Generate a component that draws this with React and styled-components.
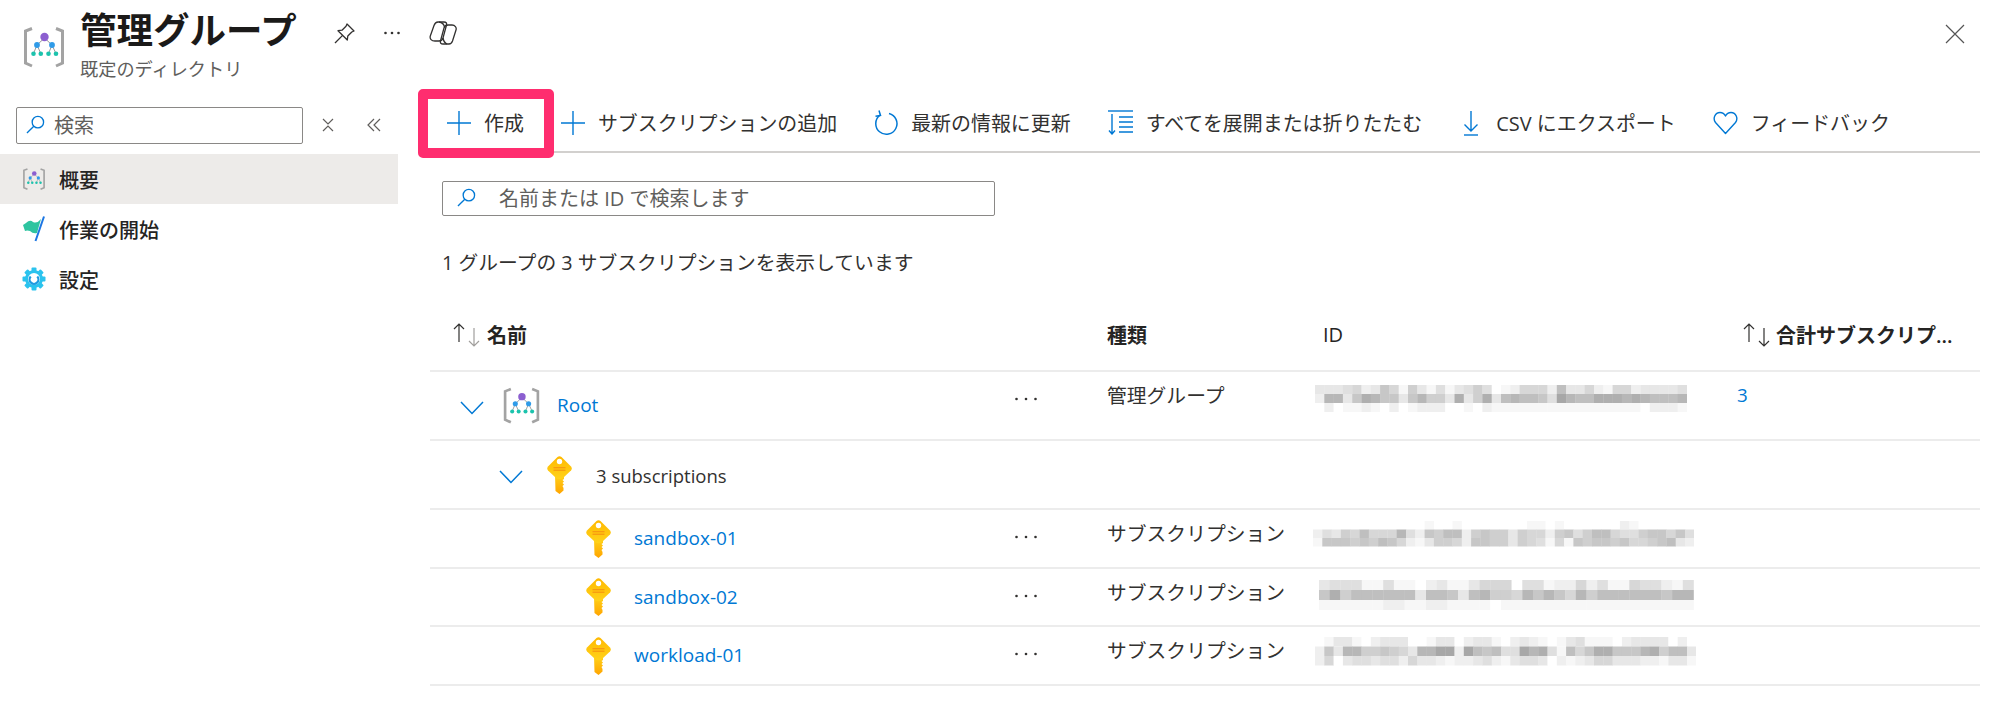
import React from 'react';
import styled, { createGlobalStyle } from 'styled-components';

const GlobalStyle = createGlobalStyle`
  html, body {
    margin: 0;
    padding: 0;
    background: #fff;
  }
  body {
    font-family: "Open Sans", "Noto Sans CJK JP", sans-serif;
    font-size: 20px;
    color: #323130;
  }
`

const Page = styled.div`
  width: 2000px;
  height: 728px;
  overflow: hidden;
`
const Header = styled.header`
  display: flex;
  align-items: flex-start;
  height: 88px;
  padding-top: 8px;
`
const HeaderIcon = styled.div`
  display: flex;
  margin: 17px 14px 0 22px;
`
const TitleBlock = styled.div`
  display: flex;
  flex-direction: column;
`
const Title = styled.h1`
  margin: 0;
  font-size: 36.5px;
  line-height: 44px;
  font-weight: 700;
  color: #1b1a19;
`
const Subtitle = styled.div`
  margin-top: 4px;
  font-size: 18.2px;
  line-height: 26px;
  color: #605e5c;
`
const HeaderActions = styled.div`
  display: flex;
  align-items: center;
  height: 50px;
  margin-left: 37px;
  gap: 29px;
  color: #323130;
`
const CloseButton = styled.div`
  display: flex;
  margin: 16px 35px 0 auto;
  color: #555;
`
const Body = styled.div`
  display: flex;
`
const Sidebar = styled.aside`
  width: 398px;
  flex-shrink: 0;
  padding-top: 11px;
`
const SideTools = styled.div`
  display: flex;
  align-items: center;
  padding-left: 16px;
  height: 36px;
`
const SearchBox = styled.div`
  display: flex;
  align-items: center;
  box-sizing: border-box;
  width: ${(p) => p.$width}px;
  height: ${(p) => p.$height}px;
  padding-left: ${(p) => p.$pad}px;
  padding-bottom: 2px;
  gap: ${(p) => p.$gap}px;
  border: 1.5px solid #8a8886;
  border-radius: 2px;
  background: #fff;
  color: #605e5c;
  white-space: nowrap;
`
const SideIconButton = styled.div`
  display: flex;
  margin-left: ${(p) => p.$left}px;
  color: #605e5c;
`
const NavList = styled.nav`
  margin-top: 11px;
`
const NavItem = styled.div`
  display: flex;
  align-items: center;
  height: 50px;
  padding-left: 22px;
  gap: 13px;
  font-weight: 500;
  color: #252423;
  background: ${(p) => (p.$active ? '#edebe9' : 'transparent')};
`
const NavIcon = styled.div`
  display: flex;
  justify-content: center;
  width: 24px;
`
const Main = styled.main`
  flex: 1;
  margin: 0 20px;
  min-width: 0;
`
const Toolbar = styled.div`
  display: flex;
  align-items: center;
  height: 55px;
  padding-left: 29px;
  gap: 37px;
  border-bottom: 2px solid #d2d0ce;
  font-size: 19.95px;
  white-space: nowrap;
`
const ToolButton = styled.div`
  position: relative;
  display: flex;
  align-items: center;
  box-sizing: border-box;
  gap: 13px;
  height: 100%;
  padding-bottom: 2px;
  color: #323130;
  svg {
    color: #0078d4;
    flex-shrink: 0;
  }
`
const Highlight = styled.div`
  position: absolute;
  left: -29px;
  right: -30px;
  top: -7px;
  bottom: -7px;
  border: 10px solid #ff2d6f;
  border-radius: 5px;
`
const ContentSearch = styled.div`
  margin: 28px 0 0 24px;
`
const CountText = styled.div`
  margin: 33px 0 0 24px;
  font-size: 19.8px;
  line-height: 28px;
`
const Table = styled.div`
  margin: 24px 0 0 12px;
`
const Row = styled.div`
  display: grid;
  grid-template-columns: 570px 107px 216px 415px 1fr;
  box-sizing: border-box;
  height: ${(p) => p.$height}px;
  border-bottom: 2px solid #ececec;
`
const HeadCell = styled.div`
  display: flex;
  align-items: center;
  gap: ${(p) => p.$gap || 0}px;
  padding-left: ${(p) => p.$pad || 0}px;
  padding-bottom: 2px;
  font-weight: ${(p) => p.$weight || 600};
  color: #252423;
  white-space: nowrap;
`
const TreeCell = styled.div`
  display: flex;
  align-items: center;
  gap: ${(p) => p.$gap}px;
  padding-left: ${(p) => p.$indent}px;
`
const Chevron = styled.svg`
  margin-top: 5px;
  color: #0078d4;
`
const RootGlyph = styled.div`
  display: flex;
  margin-left: 2px;
`
const NodeLink = styled.a`
  padding-bottom: 1px;
  font-size: 19px;
  color: #0078d4;
  text-decoration: none;
`
const NodeLabel = styled.span`
  padding-top: 1px;
  font-size: 18.5px;
`
const DotsCell = styled.div`
  display: flex;
  padding: 25px 0 0 15px;
`
const TextCell = styled.div`
  padding-top: 10px;
  font-size: 19.8px;
  line-height: 28px;
  white-space: nowrap;
`
const IdCell = styled.div`
  margin-left: ${(p) => p.$shift}px;
  padding-top: ${(p) => p.$top}px;
`
const CountLink = styled.a`
  margin-left: -1px;
  padding-top: 9px;
  line-height: 28px;
  font-size: 18.8px;
  color: #0078d4;
`
const MosaicSvg = styled.svg`
  display: block;
  filter: blur(0.6px);
`

const Mosaic = ({ rows, cell, cellHeight }) => (
  <MosaicSvg
    width={rows[0].length * cell}
    height={rows.length * cellHeight}
    viewBox={`0 0 ${rows[0].length * cell} ${rows.length * cellHeight}`}
  >
    {rows.map((line, y) =>
      line.split('').map((d, x) => {
        const g = 255 - parseInt(d, 16) * 8;
        return (
          <rect
            key={`${x}-${y}`}
            x={x * cell}
            y={y * cellHeight}
            width={cell + 0.3}
            height={cellHeight}
            fill={`rgb(${g},${g},${g})`}
          />
        );
      })
    )}
  </MosaicSvg>
);

const GroupIcon = ({ size = 44 }) => (
  <svg width={size} height={size * 45 / 44} viewBox="0 0 44 45">
    <path d="M10 3.5 L3.5 6 V38 L10 41" fill="none" stroke="#a3a3a3" strokeWidth="3" />
    <path d="M34 3.5 L40.5 6 V38 L34 41" fill="none" stroke="#a3a3a3" strokeWidth="3" />
    <g fill="none" stroke="#8a8a8a" strokeWidth="0.9">
      <path d="M22.5 13 L15 20 M22.5 13 L30 20" />
      <path d="M15 20 L11.5 28.5 M15 20 L18.8 28.5 M30 20 L26.5 28.5 M30 20 L34 28.5" />
    </g>
    <circle cx="22.5" cy="12" r="4.2" fill="#8c5fd0" />
    <circle cx="15" cy="20" r="2.9" fill="#2f9be8" />
    <circle cx="30" cy="20" r="2.9" fill="#2f9be8" />
    <circle cx="11.5" cy="28.7" r="2.3" fill="#1cc3ad" />
    <circle cx="18.8" cy="28.7" r="2.3" fill="#1cc3ad" />
    <circle cx="26.5" cy="28.7" r="2.3" fill="#1cc3ad" />
    <circle cx="34" cy="28.7" r="2.3" fill="#1cc3ad" />
  </svg>
);

const KeyIcon = () => (
  <svg width="25" height="38" viewBox="0 0 25 38">
    <defs>
      <linearGradient id="keyHead" x1="0" y1="0" x2="0" y2="1">
        <stop offset="0" stopColor="#ffb900" />
        <stop offset="1" stopColor="#ffd21a" />
      </linearGradient>
      <linearGradient id="keyStem" x1="0" y1="0" x2="0" y2="1">
        <stop offset="0" stopColor="#ffd21a" />
        <stop offset="1" stopColor="#ffa400" />
      </linearGradient>
    </defs>
    <path d="M8 19 H17 V23 L15.5 24 L17 25.5 L15.5 27 L17 28.5 L15.5 30 L16.5 32 V34.5 L12.5 38 L8.5 35 Z" fill="url(#keyStem)" />
    <path d="M10.5 1 Q12.5 -0.5 14.5 1 L24 10.5 Q25.5 12.5 24 14.5 L16 22 Q12.5 24.5 9 22 L1 14.5 Q-0.5 12.5 1 10.5 Z" fill="url(#keyHead)" />
    <circle cx="12.5" cy="5.5" r="2.7" fill="#fff" />
    <rect x="6.5" y="11" width="12" height="1.3" fill="#f79a10" />
    <rect x="6.5" y="13.6" width="12" height="1.3" fill="#f79a10" />
  </svg>
);

const FlagIcon = () => (
  <svg width="24" height="26" viewBox="0 0 24 26">
    <path d="M1 9 L4 7 Q8 3 11 6 Q15 8 19 3 L15 17 Q11 18 8 15 Q5 14 3 15 Z" fill="#2ec4a0" />
    <path d="M22 0.5 L13.5 25" stroke="#1c76e3" strokeWidth="2" fill="none" />
  </svg>
);

const GearIcon = () => (
  <svg width="24" height="24" viewBox="0 0 24 24">
    <g fill="#2bc3ee">
      <circle cx="12" cy="12" r="9" />
      {[0, 45, 90, 135, 180, 225, 270, 315].map((a) => (
        <rect key={a} x="9.5" y="0.5" width="5" height="5" rx="1" transform={`rotate(${a} 12 12)`} />
      ))}
    </g>
    <circle cx="12" cy="12" r="6" fill="#fff" />
    <path d="M8.7 9.5 A4.4 4.4 0 1 0 15.3 9.5" fill="none" stroke="#1f9be0" strokeWidth="2.2" />
  </svg>
);

const SearchIcon = ({ size = 20 }) => (
  <svg width={size} height={size} viewBox="0 0 20 20" fill="none" stroke="#0078d4" strokeWidth="1.4">
    <circle cx="12.5" cy="7.5" r="6" />
    <path d="M8.2 11.8 L1 19" />
  </svg>
);

const PinIcon = () => (
  <svg width="21" height="21" viewBox="0 0 21 21" fill="none" stroke="currentColor" strokeWidth="1.3" strokeLinejoin="round">
    <path d="M13 1 L20 8 L17.8 9 L13.8 13 L13.3 17 L4 7.7 L8 7.2 L12 3.2 Z" />
    <path d="M8.6 12.4 L1 20" />
  </svg>
);

const Dots = ({ width = 16 }) => (
  <svg width={width} height="4" viewBox={`0 0 ${width} 4`} fill="#323130">
    <circle cx="1.5" cy="2" r="1.3" />
    <circle cx={width / 2} cy="2" r="1.3" />
    <circle cx={width - 1.5} cy="2" r="1.3" />
  </svg>
);

const CopilotIcon = () => (
  <svg width="28" height="24" viewBox="0 0 28 24" fill="none" stroke="currentColor" strokeWidth="1.3" strokeLinejoin="round">
    <path d="M9 1 H15 C17 1 18 2 17.5 4 L14 17 C13.5 19 12 20 10 20 H6 C2.5 20 0.5 18 1.3 15 L5 4.5 C5.8 2.3 7 1 9 1 Z" />
    <path d="M19 4 H23 C26 4 27.8 6.5 27 9 L23.5 20 C22.8 22 21.5 23 20 23 H14 C12 23 11 22 11.5 20 L15 7 C15.5 5 17 4 19 4 Z" />
    <path d="M10 1 C13 1.5 15 3 15.5 6 M14 17 C14.5 19.5 15.5 22 18 23" />
  </svg>
);

const CloseIcon = () => (
  <svg width="20" height="20" viewBox="0 0 20 20" stroke="currentColor" strokeWidth="1.2" fill="none">
    <path d="M1 1 L19 19 M19 1 L1 19" />
  </svg>
);

const CollapseIcon = () => (
  <svg width="12" height="14" viewBox="0 0 12 14" fill="none" stroke="currentColor" strokeWidth="1.2">
    <path d="M1 1 L6 6 L11 1 M1 13 L6 8 L11 13" />
  </svg>
);

const DoubleLeftIcon = () => (
  <svg width="14" height="14" viewBox="0 0 14 14" fill="none" stroke="currentColor" strokeWidth="1.2">
    <path d="M7 1 L1 7 L7 13 M13 1 L7 7 L13 13" />
  </svg>
);

const PlusIcon = () => (
  <svg width="24" height="24" viewBox="0 0 24 24" stroke="currentColor" strokeWidth="1.4" fill="none">
    <path d="M12 0 V24 M0 12 H24" />
  </svg>
);

const RefreshIcon = () => (
  <svg width="24" height="26" viewBox="0 0 24 26" stroke="currentColor" strokeWidth="1.5" fill="none">
    <path d="M15 3.4 A10.6 10.6 0 1 1 6 5.2" />
    <path d="M5 0.5 L6.5 5.5 L1.5 6.2" />
  </svg>
);

const ExpandIcon = () => (
  <svg width="25" height="25" viewBox="0 0 25 25" stroke="currentColor" strokeWidth="1.4" fill="none">
    <path d="M0 1 H25" />
    <path d="M4 4 V24 M1 20.5 L4 24 L7 20.5" />
    <path d="M11 7 H25 M11 12 H25 M11 17 H25 M11 22 H25" />
  </svg>
);

const DownloadIcon = () => (
  <svg width="24" height="26" viewBox="0 0 24 26" stroke="currentColor" strokeWidth="1.4" fill="none">
    <path d="M12 1 V21 M5.5 14.5 L12 21 L18.5 14.5" />
    <path d="M5 25 H19" />
  </svg>
);

const HeartIcon = () => (
  <svg width="25" height="24" viewBox="0 0 25 24" stroke="currentColor" strokeWidth="1.4" fill="none" strokeLinejoin="round">
    <path d="M12.5 22.5 L2.5 11.5 C-0.5 7.5 2 1.5 7 1.5 C9.5 1.5 11.5 3 12.5 5 C13.5 3 15.5 1.5 18 1.5 C23 1.5 25.5 7.5 22.5 11.5 Z" />
  </svg>
);

const SortIcon = ({ upDark, downDark }) => (
  <svg width="27" height="24" viewBox="0 0 27 24" fill="none" strokeWidth="1.2">
    <path d="M6 19 V1 M1 6 L6 1 L11 6" stroke={upDark ? '#323130' : '#a19f9d'} />
    <path d="M21 5 V23 M16 18 L21 23 L26 18" stroke={downDark ? '#323130' : '#a19f9d'} />
  </svg>
);

const ChevronDown = () => (
  <Chevron width="24" height="14" viewBox="0 0 24 14" fill="none" stroke="currentColor" strokeWidth="1.5">
    <path d="M1 1 L12 12.5 L23 1" />
  </Chevron>
);

const ID_ROWS = {
  root: ['3334523751631413464012555283352155233334', '29937a977379663a36a3898874b988aaa9a98889', '0201121020122200102111111111111111102221'],
  first: ['00000000000010010000000110100000021000000', '24365855594276882676636552674688544677574', '17776768752136652776636541517677675567832'],
  second: ['34441141102311355504412252411544214', '7a688888838873896659797596888888799', '11111122112211110111111111111111111'],
  third: ['01331023330013302331023210134111023333020', '2739966765399bb2b87844b9a41857aa7779a6883', '25034434425332122342134430212355333221331'],
};

const TYPE_GROUP = '管理グループ';
const TYPE_SUB = 'サブスクリプション';

const SubRow = ({ name, height, idRows, cell, cellHeight, shift, top }) => (
  <Row $height={height}>
    <TreeCell $indent={156} $gap={23}>
      <KeyIcon />
      <NodeLink>{name}</NodeLink>
    </TreeCell>
    <DotsCell><Dots width={22} /></DotsCell>
    <TextCell>{TYPE_SUB}</TextCell>
    <IdCell $shift={shift} $top={top}>
      <Mosaic rows={idRows} cell={cell} cellHeight={cellHeight} />
    </IdCell>
    <div />
  </Row>
);

const App = () => {
  return (
    <Page>
      <GlobalStyle />
      <Header>
        <HeaderIcon><GroupIcon /></HeaderIcon>
        <TitleBlock>
          <Title>管理グループ</Title>
          <Subtitle>既定のディレクトリ</Subtitle>
        </TitleBlock>
        <HeaderActions>
          <PinIcon />
          <Dots />
          <CopilotIcon />
        </HeaderActions>
        <CloseButton><CloseIcon /></CloseButton>
      </Header>
      <Body>
        <Sidebar>
          <SideTools>
            <SearchBox $width={287} $height={37} $pad={9} $gap={9}>
              <SearchIcon size={19} />
              検索
            </SearchBox>
            <SideIconButton $left={19}><CollapseIcon /></SideIconButton>
            <SideIconButton $left={33}><DoubleLeftIcon /></SideIconButton>
          </SideTools>
          <NavList>
            <NavItem $active>
              <NavIcon><GroupIcon size={24} /></NavIcon>
              概要
            </NavItem>
            <NavItem>
              <NavIcon><FlagIcon /></NavIcon>
              作業の開始
            </NavItem>
            <NavItem>
              <NavIcon><GearIcon /></NavIcon>
              設定
            </NavItem>
          </NavList>
        </Sidebar>
        <Main>
          <Toolbar>
            <ToolButton>
              <Highlight />
              <PlusIcon />
              作成
            </ToolButton>
            <ToolButton><PlusIcon />サブスクリプションの追加</ToolButton>
            <ToolButton><RefreshIcon />最新の情報に更新</ToolButton>
            <ToolButton><ExpandIcon />すべてを展開または折りたたむ</ToolButton>
            <ToolButton><DownloadIcon />CSV にエクスポート</ToolButton>
            <ToolButton><HeartIcon />フィードバック</ToolButton>
          </Toolbar>
          <ContentSearch>
            <SearchBox $width={553} $height={35} $pad={14} $gap={23}>
              <SearchIcon size={19} />
              名前または ID で検索します
            </SearchBox>
          </ContentSearch>
          <CountText>1 グループの 3 サブスクリプションを表示しています</CountText>
          <Table>
            <Row $height={71}>
              <HeadCell $pad={23} $gap={7}>
                <SortIcon upDark />
                名前
              </HeadCell>
              <div />
              <HeadCell>種類</HeadCell>
              <HeadCell $weight={500}>ID</HeadCell>
              <HeadCell $pad={5} $gap={6}>
                <SortIcon upDark downDark />
                合計サブスクリプ...
              </HeadCell>
            </Row>
            <Row $height={69}>
              <TreeCell $indent={30} $gap={16}>
                <ChevronDown />
                <RootGlyph><GroupIcon size={39} /></RootGlyph>
                <NodeLink>Root</NodeLink>
              </TreeCell>
              <DotsCell><Dots width={22} /></DotsCell>
              <TextCell>{TYPE_GROUP}</TextCell>
              <IdCell $shift={-8} $top={13}>
                <Mosaic rows={ID_ROWS.root} cell={9.3} cellHeight={9} />
              </IdCell>
              <CountLink>3</CountLink>
            </Row>
            <Row $height={69}>
              <TreeCell $indent={69} $gap={24}>
                <ChevronDown />
                <KeyIcon />
                <NodeLabel>3 subscriptions</NodeLabel>
              </TreeCell>
            </Row>
            <SubRow name="sandbox-01" height={59} idRows={ID_ROWS.first} cell={9.3} cellHeight={8.5} shift={-10} top={11} />
            <SubRow name="sandbox-02" height={58} idRows={ID_ROWS.second} cell={10.7} cellHeight={10} shift={-4} top={11} />
            <SubRow name="workload-01" height={59} idRows={ID_ROWS.third} cell={9.3} cellHeight={9.5} shift={-8} top={10} />
          </Table>
        </Main>
      </Body>
    </Page>
  );
}

export default App;
